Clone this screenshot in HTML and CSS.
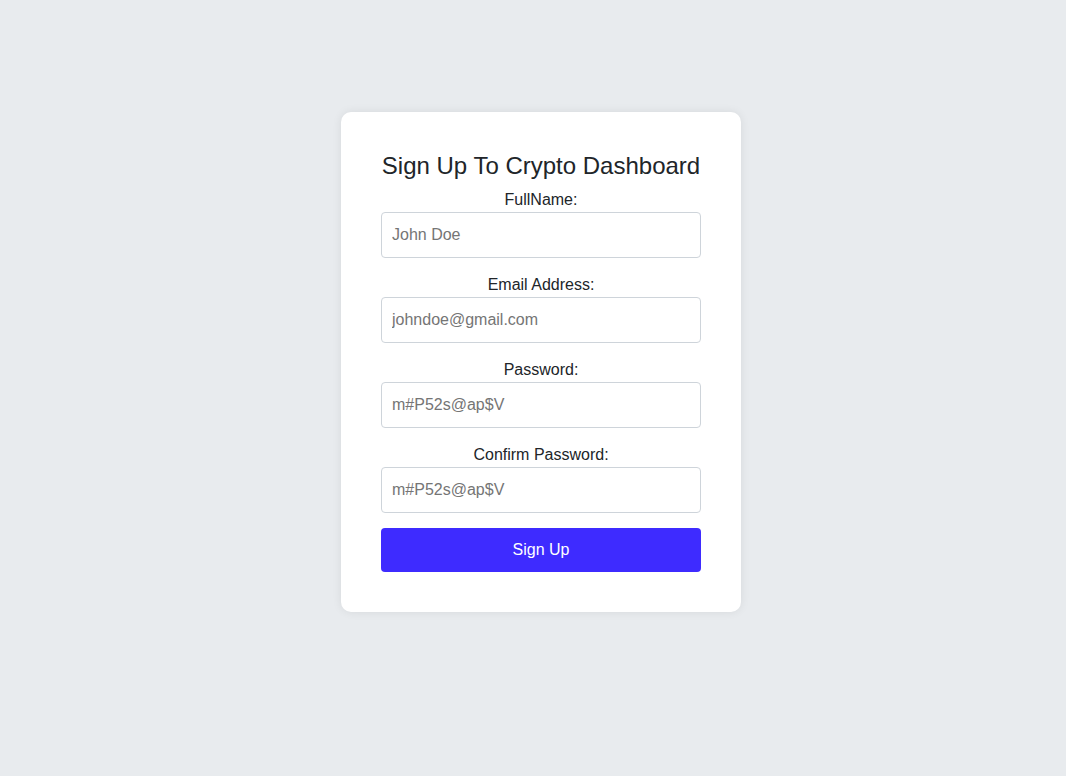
FILE: index.html
```html
<!DOCTYPE html>
<html lang="en">
<head>
<meta charset="utf-8">
<title>Sign Up To Crypto Dashboard</title>
<link rel="stylesheet" href="styles.css">
</head>
<body>
<main class="page">
  <form class="card">
    <h2 class="title">Sign Up To Crypto Dashboard</h2>
    <div class="group">
      <label class="label" for="fullname">FullName:</label>
      <input class="input" id="fullname" type="text" placeholder="John Doe">
    </div>
    <div class="group">
      <label class="label" for="email">Email Address:</label>
      <input class="input" id="email" type="email" placeholder="johndoe@gmail.com">
    </div>
    <div class="group">
      <label class="label" for="password">Password:</label>
      <input class="input" id="password" type="text" placeholder="m#P52s@ap$V">
    </div>
    <div class="group group-last">
      <label class="label" for="confirm">Confirm Password:</label>
      <input class="input" id="confirm" type="text" placeholder="m#P52s@ap$V">
    </div>
    <button class="btn" type="button">Sign Up</button>
  </form>
</main>
</body>
</html>
```

FILE: styles.css
```css
html, body {
  margin: 0;
  padding: 0;
}
body {
  background: #e8ebee;
  font-family: "Liberation Sans", Arial, sans-serif;
  color: #212529;
  min-height: 776px;
}
.page {
  display: flex;
  justify-content: center;
  padding: 112px 0 0 16px;
  box-sizing: border-box;
}
.card {
  width: 400px;
  box-sizing: border-box;
  padding: 40px;
  background: #ffffff;
  border-radius: 10px;
  box-shadow: 0 0 10px rgba(0, 0, 0, 0.08);
  display: flex;
  flex-direction: column;
}
.title {
  margin: 0 0 10px;
  font-size: 24px;
  line-height: 28px;
  font-weight: 400;
  text-align: center;
  color: #212529;
}
.group {
  display: flex;
  flex-direction: column;
  margin-bottom: 17px;
}
.group-last {
  margin-bottom: 15px;
}
.label {
  font-size: 16px;
  line-height: 18px;
  text-align: center;
  padding-top: 1px;
  margin-bottom: 3px;
  color: #212529;
}
.input {
  height: 46px;
  box-sizing: border-box;
  border: 1px solid #ced4da;
  border-radius: 4px;
  padding: 0 10px;
  font-family: "Liberation Sans", Arial, sans-serif;
  font-size: 16px;
  color: #212529;
  background: #fff;
  outline: none;
}
.input::placeholder {
  color: #757575;
}
.btn {
  height: 44px;
  border: none;
  border-radius: 4px;
  background: #3e2bff;
  color: #ffffff;
  font-family: "Liberation Sans", Arial, sans-serif;
  font-size: 16px;
  cursor: pointer;
}
```
